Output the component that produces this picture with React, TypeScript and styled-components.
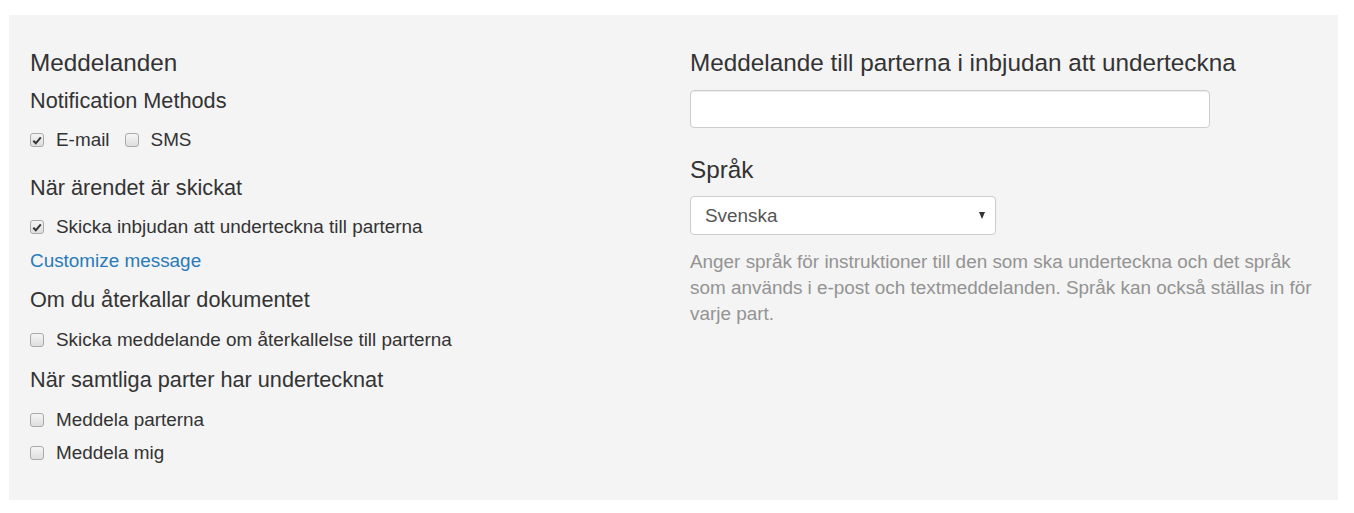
import styled, { createGlobalStyle } from "styled-components";

const GlobalStyle = createGlobalStyle`
  html, body {
    margin: 0;
    padding: 0;
    background: #fff;
  }
  body {
    padding: 15px 16px 0 9px;
    font-family: "Liberation Sans", Arial, sans-serif;
    color: #333;
  }
`;

const Panel = styled.div`
  background: #f4f4f4;
  padding: 33px 21px 34px;
  display: grid;
  grid-template-columns: 1fr 1fr;
  column-gap: 33px;
  align-items: start;
`;

const Column = styled.div`
  display: flex;
  flex-direction: column;
  align-items: flex-start;
`;

const Title = styled.h3<{ $top?: number }>`
  margin: ${(p) => p.$top ?? 0}px 0 0;
  font-size: 24.3px;
  font-weight: 400;
  line-height: 30px;
  color: #333;
`;

const SubTitle = styled.h4<{ $top: number }>`
  margin: ${(p) => p.$top}px 0 0;
  font-size: 21.7px;
  font-weight: 400;
  line-height: 26px;
  color: #333;
`;

const CheckRow = styled.div<{ $top: number }>`
  margin-top: ${(p) => p.$top}px;
  display: flex;
  align-items: center;
  gap: 15px;
  font-size: 18.9px;
  line-height: 26px;
  color: #333;
`;

const CheckLabel = styled.label`
  display: flex;
  align-items: center;
  gap: 12px;
`;

const Box = styled.span`
  box-sizing: border-box;
  width: 14px;
  height: 14px;
  border: 1px solid #a9a9a9;
  border-radius: 3px;
  background: linear-gradient(#f5f5f5, #dedede);
  display: flex;
  align-items: center;
  justify-content: center;
  flex-shrink: 0;
`;

const Link = styled.a`
  margin-top: 8px;
  font-size: 18.9px;
  line-height: 26px;
  color: #2a7ab8;
  text-decoration: none;
`;

const TextInput = styled.input`
  margin-top: 12px;
  box-sizing: border-box;
  width: 520px;
  height: 38px;
  border: 1px solid #ccc;
  border-radius: 4px;
  background: #fff;
  box-shadow: inset 0 1px 1px rgba(0, 0, 0, 0.075);
`;

const Select = styled.div`
  margin-top: 11px;
  box-sizing: border-box;
  width: 306px;
  height: 39px;
  border: 1px solid #ccc;
  border-radius: 4px;
  background: #fff;
  padding: 0 10px 0 14px;
  display: flex;
  align-items: center;
  justify-content: space-between;
  font-size: 18.9px;
  color: #555;
`;

const Arrow = styled.span`
  width: 0;
  height: 0;
  border-left: 3.5px solid transparent;
  border-right: 3.5px solid transparent;
  border-top: 7px solid #333;
`;

const Help = styled.p`
  margin: 14px 0 0;
  font-size: 18.9px;
  line-height: 26px;
  color: #939393;
`;

function Check({ checked, label }: { checked?: boolean; label: string }) {
  return (
    <CheckLabel>
      <Box>
        {checked && (
          <svg width="10" height="9" viewBox="0 0 10 9">
            <path d="M1.3 4.8 L3.8 7.3 L8.8 1.3" fill="none" stroke="#333" strokeWidth="2" />
          </svg>
        )}
      </Box>
      {label}
    </CheckLabel>
  );
}

export default function App() {
  return (
    <>
      <GlobalStyle />
      <Panel>
        <Column>
          <Title>Meddelanden</Title>
          <SubTitle $top={10}>Notification Methods</SubTitle>
          <CheckRow $top={13}>
            <Check checked label="E-mail" />
            <Check label="SMS" />
          </CheckRow>
          <SubTitle $top={22}>När ärendet är skickat</SubTitle>
          <CheckRow $top={13}>
            <Check checked label="Skicka inbjudan att underteckna till parterna" />
          </CheckRow>
          <Link href="#">Customize message</Link>
          <SubTitle $top={13}>Om du återkallar dokumentet</SubTitle>
          <CheckRow $top={14}>
            <Check label="Skicka meddelande om återkallelse till parterna" />
          </CheckRow>
          <SubTitle $top={14}>När samtliga parter har undertecknat</SubTitle>
          <CheckRow $top={14}>
            <Check label="Meddela parterna" />
          </CheckRow>
          <CheckRow $top={7}>
            <Check label="Meddela mig" />
          </CheckRow>
        </Column>
        <Column>
          <Title>Meddelande till parterna i inbjudan att underteckna</Title>
          <TextInput type="text" />
          <Title $top={27}>Språk</Title>
          <Select>
            Svenska
            <Arrow />
          </Select>
          <Help>
            Anger språk för instruktioner till den som ska underteckna och det språk som används i
            e-post och textmeddelanden. Språk kan också ställas in för varje part.
          </Help>
        </Column>
      </Panel>
    </>
  );
}
